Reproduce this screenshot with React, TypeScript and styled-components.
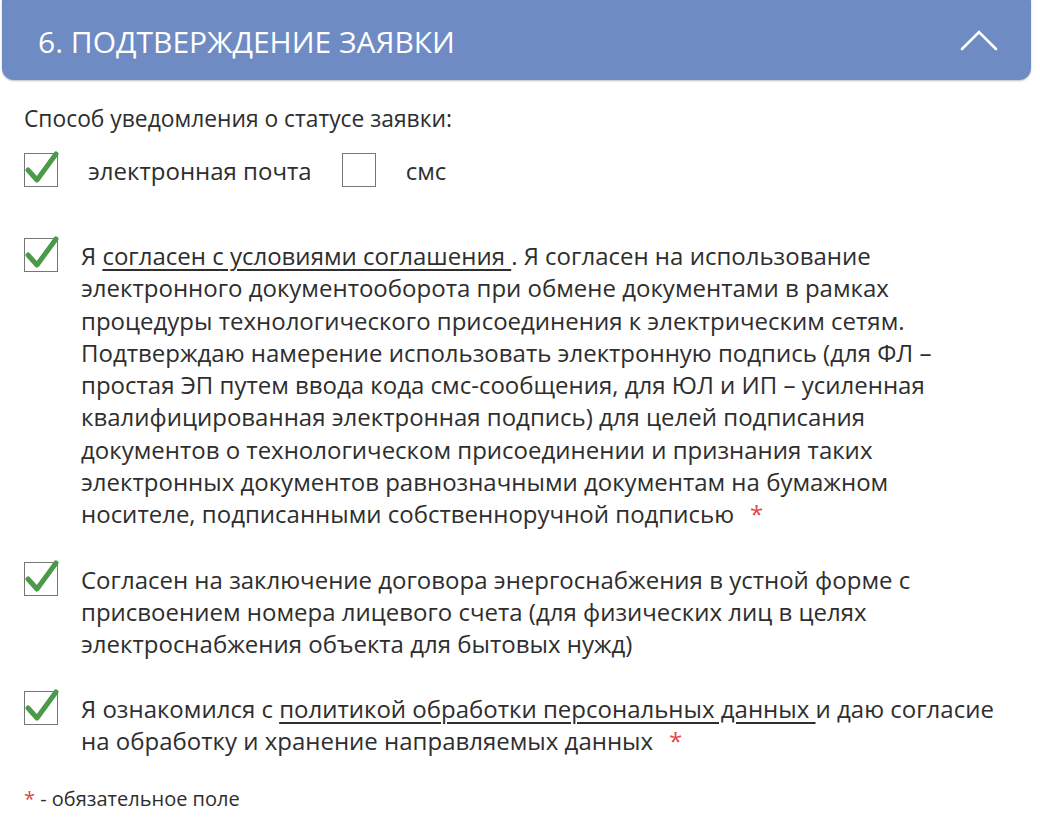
import React, { useState } from "react";
import styled, { createGlobalStyle } from "styled-components";

const GlobalStyle = createGlobalStyle`
  html, body {
    margin: 0;
    padding: 0;
    background: #ffffff;
  }
  body {
    font-family: "Open Sans", "Noto Sans", sans-serif;
    color: #2e2e2e;
  }
`;

const Page = styled.div`
  width: 1040px;
  height: 824px;
  overflow: hidden;
  background: #fff;
`;

const Header = styled.div`
  margin: 0 9px 0 2px;
  height: 80px;
  background: #6f8bc4;
  border-radius: 0 0 12px 12px;
  box-shadow: 0 1px 2px rgba(0, 0, 0, 0.25);
  display: flex;
  align-items: center;
  justify-content: space-between;
  padding: 0 32px 0 36px;
  box-sizing: border-box;
`;

const Title = styled.h2`
  margin: 0;
  padding-top: 2px;
  font-size: 30px;
  font-weight: 400;
  color: #fff;
`;

const Body = styled.div`
  padding: 26px 24px 0 24px;
`;

const Label = styled.div`
  font-size: 22.8px;
  line-height: 26px;
`;

const ChoiceRow = styled.div`
  display: flex;
  align-items: center;
  margin-top: 21px;
`;

const Choice = styled.label`
  display: flex;
  align-items: center;
  gap: 30px;
  margin-right: 30px;
  font-size: 24px;
  cursor: pointer;
`;

const Box = styled.span`
  flex: none;
  width: 32px;
  height: 32px;
  border: 1.5px solid #767676;
  background: #fff;
  position: relative;
  display: block;
`;

const Check = styled.svg`
  position: absolute;
  left: 0px;
  top: -4px;
  width: 34px;
  height: 36px;
`;

const Agreement = styled.div<{ $top: number }>`
  display: flex;
  align-items: flex-start;
  gap: 23px;
  margin-top: ${(p) => p.$top}px;
`;

const AgreementText = styled.div`
  font-size: 24px;
  line-height: 32.3px;
  margin-top: 2px;
`;

const Link = styled.a`
  color: #2e2e2e;
  text-decoration: underline;
  text-underline-offset: 4px;
  text-decoration-thickness: 2px;
`;

const Star = styled.span<{ $gap?: number }>`
  color: #e04848;
  margin-left: ${(p) => p.$gap ?? 16}px;
`;

const Footnote = styled.div`
  margin-top: 28px;
  font-size: 20px;
  line-height: 27px;
`;

const CheckBox = ({ checked, onClick }: { checked: boolean; onClick?: () => void }) => (
  <Box onClick={onClick}>
    {checked && (
      <Check viewBox="0 0 34 36">
        <path
          d="M3 20 L12 30 L31 4"
          fill="none"
          stroke="#4b9a49"
          strokeWidth="5"
          strokeLinecap="round"
          strokeLinejoin="round"
        />
      </Check>
    )}
  </Box>
);

const Chevron = () => (
  <svg width="40" height="24" viewBox="0 0 40 24">
    <path d="M3 21 L20 4 L37 21" fill="none" stroke="#fff" strokeWidth="2.6" strokeLinecap="round" />
  </svg>
);

export default function App() {
  const [state, setState] = useState({ email: true, sms: false, a: true, b: true, c: true });
  const toggle = (k: keyof typeof state) => setState((s) => ({ ...s, [k]: !s[k] }));

  return (
    <Page>
      <GlobalStyle />
      <Header>
        <Title>6. ПОДТВЕРЖДЕНИЕ ЗАЯВКИ</Title>
        <Chevron />
      </Header>
      <Body>
        <Label>Способ уведомления о статусе заявки:</Label>
        <ChoiceRow>
          <Choice>
            <CheckBox checked={state.email} onClick={() => toggle("email")} />
            электронная почта
          </Choice>
          <Choice>
            <CheckBox checked={state.sms} onClick={() => toggle("sms")} />
            смс
          </Choice>
        </ChoiceRow>

        <Agreement $top={51}>
          <CheckBox checked={state.a} onClick={() => toggle("a")} />
          <AgreementText>
            Я <Link>согласен с условиями соглашения </Link>. Я согласен на использование
            <br />
            электронного документооборота при обмене документами в рамках
            <br />
            процедуры технологического присоединения к электрическим сетям.
            <br />
            Подтверждаю намерение использовать электронную подпись (для ФЛ –
            <br />
            простая ЭП путем ввода кода смс-сообщения, для ЮЛ и ИП – усиленная
            <br />
            квалифицированная электронная подпись) для целей подписания
            <br />
            документов о технологическом присоединении и признания таких
            <br />
            электронных документов равнозначными документам на бумажном
            <br />
            носителе, подписанными собственноручной подписью<Star>*</Star>
          </AgreementText>
        </Agreement>

        <Agreement $top={31}>
          <CheckBox checked={state.b} onClick={() => toggle("b")} />
          <AgreementText>
            Согласен на заключение договора энергоснабжения в устной форме с
            <br />
            присвоением номера лицевого счета (для физических лиц в целях
            <br />
            электроснабжения объекта для бытовых нужд)
          </AgreementText>
        </Agreement>

        <Agreement $top={30}>
          <CheckBox checked={state.c} onClick={() => toggle("c")} />
          <AgreementText>
            Я ознакомился с <Link>политикой обработки персональных данных </Link>и даю согласие
            <br />
            на обработку и хранение направляемых данных<Star>*</Star>
          </AgreementText>
        </Agreement>

        <Footnote>
          <Star $gap={0}>*</Star> - обязательное поле
        </Footnote>
      </Body>
    </Page>
  );
}
